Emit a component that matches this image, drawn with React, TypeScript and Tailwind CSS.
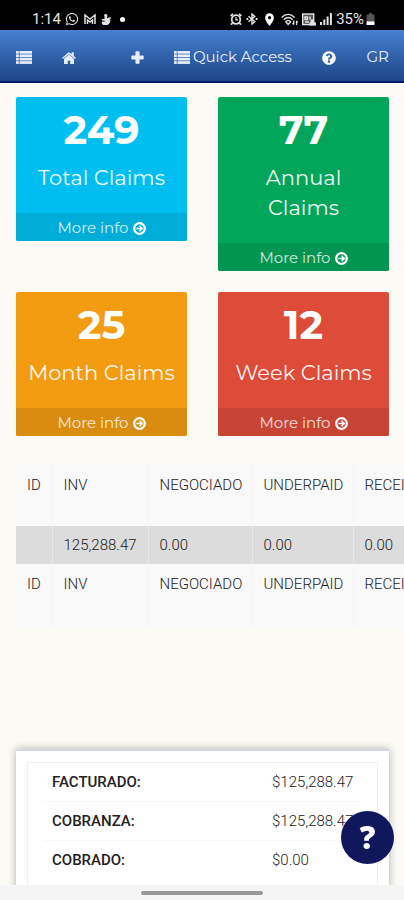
import React from "react";
import { FaQuestionCircle, FaWhatsapp } from "react-icons/fa";
import { MdLocationOn } from "react-icons/md";

const display = "font-['Montserrat','Inter',sans-serif]";

type Stat = { value: string; label: string; color: string; footer: string };

const stats: Stat[] = [
  { value: "249", label: "Total Claims", color: "bg-[#00bff0]", footer: "bg-[#00acd8]" },
  { value: "77", label: "Annual Claims", color: "bg-[#02a65b]", footer: "bg-[#029552]" },
  { value: "25", label: "Month Claims", color: "bg-[#f39c12]", footer: "bg-[#da8c10]" },
  { value: "12", label: "Week Claims", color: "bg-[#dd4b39]", footer: "bg-[#c74333]" },
];

const columns = ["ID", "INV", "NEGOCIADO", "UNDERPAID", "RECEIVED"];
const values = ["", "125,288.47", "0.00", "0.00", "0.00"];

const totals = [
  ["FACTURADO:", "$125,288.47"],
  ["COBRANZA:", "$125,288.47"],
  ["COBRADO:", "$0.00"],
];

function ListIcon() {
  return (
    <svg viewBox="0 0 16 13" className="h-[13px] w-4 shrink-0" fill="currentColor" aria-hidden="true">
      {[0, 3.4, 6.8, 10.2].map((y) => (
        <g key={y}>
          <rect x="0" y={y} width="2.8" height="2.7" />
          <rect x="3.5" y={y} width="12.5" height="2.7" />
        </g>
      ))}
    </svg>
  );
}

function HomeIcon() {
  return (
    <svg viewBox="0 0 14 12" className="h-3 w-[14px]" fill="currentColor" aria-hidden="true">
      <path d="M7 2.600 2 6.800v4.600c0 .3.200.6.500.6H5.800V8.800h2.400V12h3.300c.3 0 .5-.3.500-.6V6.800z" />
      <path d="M13.800 5.700 11.800 4V.6c0-.2-.1-.3-.3-.3H10c-.2 0-.3.100-.3.300v1.600L7.900.7c-.5-.4-1.300-.4-1.800 0L.2 5.700c-.1.100-.2.300 0 .4l.5.600c.1.100.3.100.4 0L7 1.900l5.900 4.800c.1.100.3.100.4 0l.5-.6c.2-.1.100-.3 0-.4z" />
    </svg>
  );
}

function PlusIcon() {
  return (
    <svg viewBox="0 0 12 12" className="size-[13px]" fill="currentColor" aria-hidden="true">
      <path d="M4.800.3h2.400c.4 0 .7.300.7.700v3.100H11c.4 0 .7.300.7.700v2.400c0 .4-.3.700-.7.700H7.900V11c0 .4-.3.700-.7.700H4.800c-.4 0-.7-.3-.7-.7V7.900H1c-.4 0-.7-.3-.7-.7V4.800c0-.4.300-.7.700-.7h3.100V1c0-.4.300-.7.700-.7z" />
    </svg>
  );
}

function ArrowIcon() {
  return (
    <svg viewBox="0 0 12 12" className="size-[13px] text-white" fill="none" stroke="currentColor" aria-hidden="true">
      <circle cx="6" cy="6" r="4.900" strokeWidth="2.100" />
      <path d="M3.100 6h5.200M6 3.400 8.600 6 6 8.600" strokeWidth="1.400" />
    </svg>
  );
}

function StatusBar() {
  return (
    <div className="flex h-[30px] shrink-0 items-center justify-between bg-black pt-2 pr-[29px] pl-8 font-['Roboto',sans-serif] text-[15px] text-[#e4e4e4]">
      <div className="flex items-center gap-1">
        <span>1:14</span>
        <FaWhatsapp className="size-[14px]" />
        <svg viewBox="0 0 14 12" className="h-3 w-[14px]" fill="none" stroke="currentColor" strokeWidth="1.5" aria-hidden="true">
          <path d="M2 11V2l5 4 5-4v9M4.500 11V7l2.500 2 2.500-2v4" />
        </svg>
        <svg viewBox="0 0 12 12" className="size-[11px]" fill="currentColor" aria-hidden="true">
          <path d="M5 0c1.800 0 2.200 1.300 1.800 2.700L6.300 4.700 10 3.500c1-.2 1.500 1 .6 1.500L9 6c1.700.2 1.800 1.500.5 2 1 .8.500 1.900-.6 2-.2 1.300-1.200 2-2.800 2H4c-2 0-3-.8-3.200-2.200C.7 8.600 1.500 8 2.500 8.200L4 8.500V7.300L1.500 7C.4 6.700.6 5.400 1.700 5.400h2L3.900 3 3.400 1.600C3.300.7 4 0 5 0z" />
        </svg>
        <span className="ml-1 size-[5px] rounded-full bg-white" />
      </div>
      <div className="flex items-center gap-1">
        <svg viewBox="0 0 12 12" className="size-3" fill="none" stroke="currentColor" aria-hidden="true">
          <circle cx="6" cy="6.500" r="4.300" strokeWidth="1.700" />
          <path d="M.7 3 3 .8M11.300 3 9 .8M2.500 10 1 11.700M9.500 10l1.500 1.700" strokeWidth="1.800" />
          <path d="M6 4v2.800h2" strokeWidth="1.200" />
        </svg>
        <svg viewBox="0 0 12 12" className="size-3" fill="none" stroke="currentColor" strokeWidth="1.400" aria-hidden="true">
          <path d="M2.500 3.200 8.800 8.500 6 11V1l2.800 2.500L2.500 8.800" />
          <path d="M.5 6h1.800M9.700 6h1.800" strokeWidth="1.800" />
        </svg>
        <MdLocationOn className="size-[15px] text-white" />
        <svg viewBox="0 0 17 13" className="h-[13px] w-[17px]" fill="none" stroke="currentColor" strokeWidth="1.3" aria-hidden="true">
          <path d="M.7 4.500c4-4.300 9-4.300 13 0M2.700 6.700c3-2.900 6-2.900 9 0M4.700 8.800c1.700-1.600 3.300-1.600 5 0L7.200 11.500z" />
          <path d="M12.800 7.500v4M11.600 10l1.200 1.500M15.600 12V8M16.800 9.500 15.600 8" />
        </svg>
        <svg viewBox="0 0 14 13" className="h-[13px] w-[14px]" aria-hidden="true">
          <rect x=".7" y="1" width="11" height="10.600" fill="#555" stroke="currentColor" strokeWidth="1.4" />
          <path d="M3 4h2.500v2.500H3zM8 3.500v3M3 9h4" stroke="currentColor" strokeWidth="1.4" fill="none" />
          <path d="M8.500 6.500h3V9l2.500.5v3H7.500V9.500h1z" fill="currentColor" />
        </svg>
        <svg viewBox="0 0 12 12" className="size-3" fill="currentColor" aria-hidden="true">
          <rect x="0" y="9" width="2" height="3" />
          <rect x="3.300" y="6.500" width="2" height="5.500" />
          <rect x="6.600" y="3.500" width="2" height="8.500" />
          <rect x="9.900" y="0" width="2" height="12" />
        </svg>
        <div className="flex items-center">
          <span>35%</span>
          <svg viewBox="0 0 9 12" className="ml-0.5 h-3 w-[9px]" aria-hidden="true">
            <path d="M3 0h3v1.500h2.500V8H.5V1.500H3z" fill="#555" />
            <path d="M.5 8.300h8V12h-8z" fill="#fff" />
          </svg>
        </div>
      </div>
    </div>
  );
}

function NavBar() {
  return (
    <nav
      className={`${display} flex h-[53px] shrink-0 items-center justify-between border-b-2 border-[#0c1a6e] bg-linear-to-b from-[#4781d2] to-[#1d4686] pt-1 pr-[15px] pl-4 text-[15px] text-[#e6eefa]`}
    >
      <button type="button" aria-label="Menu"><ListIcon /></button>
      <a href="#home" aria-label="Home"><HomeIcon /></a>
      <button type="button" aria-label="Add" className="ml-6"><PlusIcon /></button>
      <button type="button" className="flex items-center gap-[3px]"><ListIcon />Quick Access</button>
      <a href="#help" aria-label="Help"><FaQuestionCircle className="size-[14px] text-white" /></a>
      <button type="button">GR</button>
    </nav>
  );
}

function StatCard({ value, label, color, footer }: Stat) {
  return (
    <section className={`${display} ${color} overflow-hidden rounded-xs text-center text-white`}>
      <h2 className="mt-2 text-[40px] leading-[50px] font-bold">{value}</h2>
      <p className="mt-2 mb-5 px-[10px] text-[21px] leading-[30px] text-white/95">{label}</p>
      <a href="#claims" className={`${footer} flex h-7 items-center justify-center gap-1 pt-0.5 text-[15px] text-white/80`}>
        More info
        <ArrowIcon />
      </a>
    </section>
  );
}

function ClaimsTable() {
  const head = "border-r border-[#f5f5f5] px-[11px] pt-[10px] text-left align-top font-light";
  return (
    <div className="mt-[29px] ml-4 overflow-hidden font-['Roboto',sans-serif] text-[15px] leading-5 font-light text-[#222]">
      <table className="w-[480px] table-fixed border-collapse bg-[#f9f9f9]">
        <colgroup>
          <col className="w-9" />
          <col className="w-24" />
          <col className="w-[104px]" />
          <col className="w-[101px]" />
          <col />
        </colgroup>
        <thead>
          <tr className="h-[61px]">
            {columns.map((c) => <th key={c} className={head}>{c}</th>)}
          </tr>
        </thead>
        <tbody>
          <tr className="h-[38px] bg-[#dcdcdc]">
            {values.map((v, i) => (
              <td key={columns[i]} className="border-r border-[#e9e9e9] px-[11px]">{v}</td>
            ))}
          </tr>
        </tbody>
        <tfoot>
          <tr className="h-16">
            {columns.map((c) => <td key={c} className={head}>{c}</td>)}
          </tr>
        </tfoot>
      </table>
    </div>
  );
}

function Totals() {
  return (
    <section className="mt-[121px] mr-[15px] ml-4 border-t-2 border-[#d4d8e6] bg-white px-[11px] pt-[11px] pb-3 shadow-[0_0_8px_rgba(0,0,0,0.3)]">
      <dl className="border border-[#f0f0f0] px-4 pb-9 font-['Roboto',sans-serif] text-[15px] leading-[38px] text-[#222]">
        {totals.map(([name, amount]) => (
          <div key={name} className="flex border-b border-[#f7f7f7] px-2 last:border-0">
            <dt className="w-[220px] shrink-0 font-medium">{name}</dt>
            <dd className="font-light">{amount}</dd>
          </div>
        ))}
      </dl>
    </section>
  );
}

export default function App() {
  return (
    <div className="flex h-dvh flex-col overflow-hidden bg-[#fbfaf5]">
      <StatusBar />
      <NavBar />
      <main className="min-h-0 flex-1 overflow-hidden">
        <div className="grid grid-cols-2 items-start gap-x-[31px] gap-y-[21px] pt-[14px] pr-[15px] pl-4">
          {stats.map((s) => <StatCard key={s.label} {...s} />)}
        </div>
        <ClaimsTable />
        <Totals />
      </main>
      <footer className="flex h-[15px] shrink-0 justify-center bg-[#f5f5f5] pt-[6px]">
        <div className="h-1 w-[30%] rounded-full bg-[#999]" />
      </footer>
      <button
        type="button"
        aria-label="Support"
        className="fixed right-[10px] bottom-9 flex size-[53px] items-center justify-center rounded-full bg-[#10175a] font-['Open_Sans',sans-serif] text-[31px] font-extrabold text-white"
      >
        ?
      </button>
    </div>
  );
}
